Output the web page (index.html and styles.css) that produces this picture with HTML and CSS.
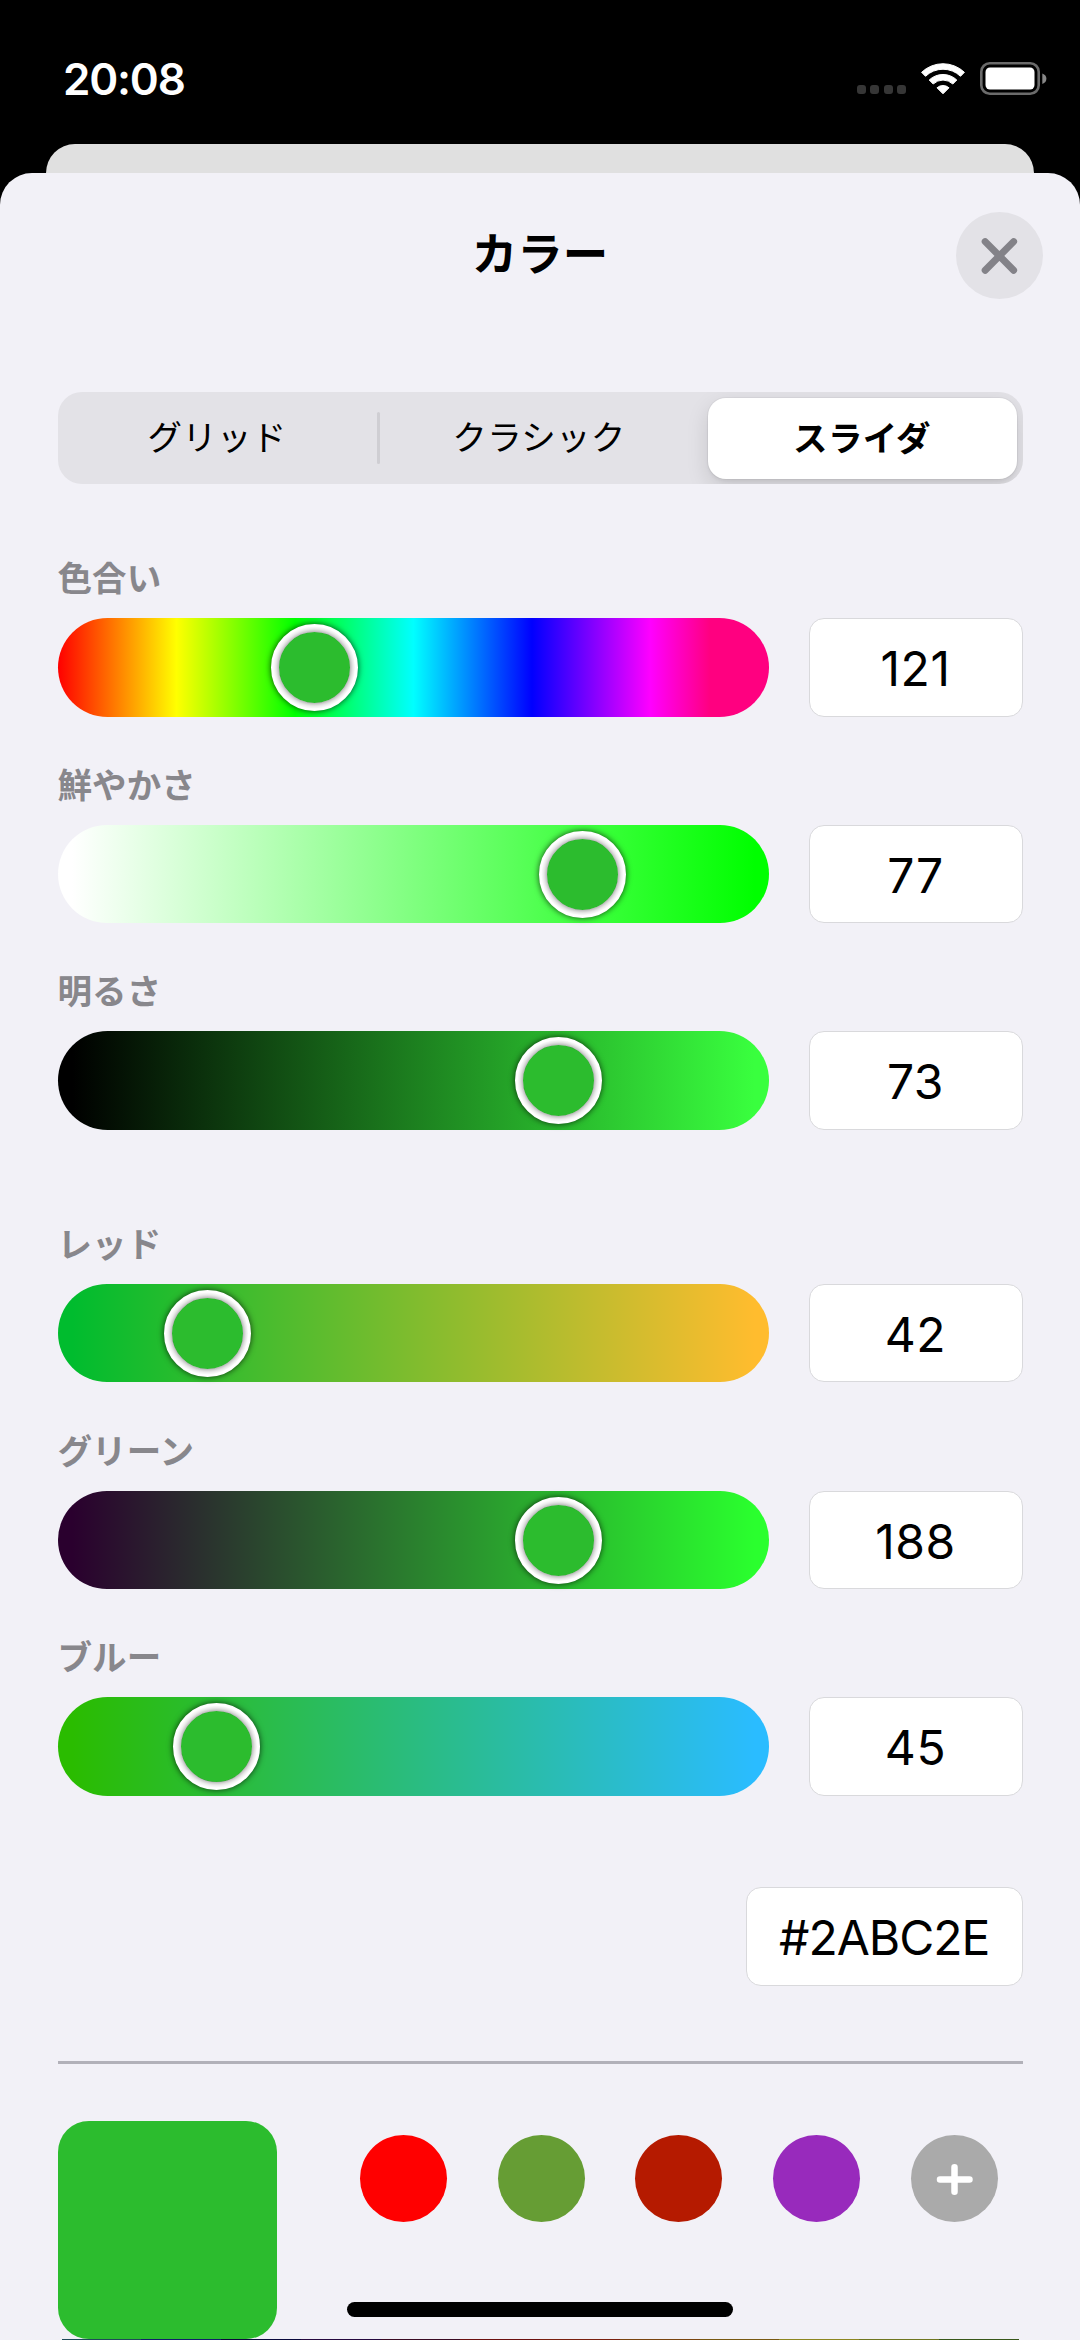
FILE: index.html
```html
<!DOCTYPE html>
<html lang="ja">
<head>
<meta charset="utf-8">
<title>カラー</title>
<link rel="stylesheet" href="styles.css">
</head>
<body>
<header class="status">
  <span class="clock">20:08</span>
  <div class="status-icons">
    <div class="signal"><i></i><i></i><i></i><i></i></div>
    <svg class="wifi" viewBox="0 0 44 33" width="44" height="33" fill="#fff">
      <path d="M0.6 10.3 A31 31 0 0 1 43.4 10.3 L39.5 14.3 A25.2 25.2 0 0 0 4.5 14.3 Z" stroke="#fff" stroke-width="1" stroke-linejoin="round"/>
      <path d="M8.2 18 A20 20 0 0 1 35.8 18 L31.8 22 A14.2 14.2 0 0 0 12.2 22 Z" stroke="#fff" stroke-width="1" stroke-linejoin="round"/>
      <path d="M16 25.8 A9 9 0 0 1 28 25.8 L22 31.8 Z" stroke="#fff" stroke-width="1" stroke-linejoin="round"/>
    </svg>
    <svg class="battery" viewBox="0 0 67 33" width="67" height="33">
      <rect x="1.3" y="1.3" width="57.4" height="30.4" rx="8.5" fill="none" stroke="#6b6b6b" stroke-width="2.6"/>
      <rect x="5.5" y="5.5" width="49" height="22" rx="4.5" fill="#fff"/>
      <path d="M62.3 11.5 Q66.4 13 66.4 16.7 Q66.4 20.4 62.3 22 Z" fill="#888"/>
    </svg>
  </div>
</header>
<div class="back-card"></div>
<main class="sheet">
  <div class="title-bar">
    <h1 class="title">カラー</h1>
    <button class="close" aria-label="閉じる">
      <svg viewBox="0 0 87 87" width="87" height="87"><path d="M29.2 29.6 L57.6 58.2 M57.6 29.6 L29.2 58.2" stroke="#838288" stroke-width="7" stroke-linecap="round"/></svg>
    </button>
  </div>
  <div class="segments">
    <div class="segment">グリッド</div>
    <div class="divider"></div>
    <div class="segment">クラシック</div>
    <div class="segment selected">スライダ</div>
  </div>
  <section class="group">
    <div class="row"><div class="label">色合い</div><div class="control"><div class="track hue"><div class="knob" style="left:213px"></div></div><div class="field">121</div></div></div>
    <div class="row"><div class="label">鮮やかさ</div><div class="control"><div class="track saturation"><div class="knob" style="left:481.5px"></div></div><div class="field">77</div></div></div>
    <div class="row"><div class="label">明るさ</div><div class="control"><div class="track brightness"><div class="knob" style="left:457.5px"></div></div><div class="field">73</div></div></div>
  </section>
  <section class="group">
    <div class="row"><div class="label">レッド</div><div class="control"><div class="track red"><div class="knob" style="left:106px"></div></div><div class="field">42</div></div></div>
    <div class="row"><div class="label">グリーン</div><div class="control"><div class="track green"><div class="knob" style="left:457.5px"></div></div><div class="field">188</div></div></div>
    <div class="row"><div class="label">ブルー</div><div class="control"><div class="track blue"><div class="knob" style="left:115px"></div></div><div class="field">45</div></div></div>
  </section>
  <div class="hex-row"><div class="field hex">#2ABC2E</div></div>
  <div class="separator"></div>
  <div class="palette">
    <div class="current"></div>
    <div class="swatches">
      <div class="swatch pure-red"></div>
      <div class="swatch olive"></div>
      <div class="swatch brick"></div>
      <div class="swatch purple"></div>
      <div class="swatch add"><svg viewBox="0 0 87 87" width="87" height="87"><path d="M29 44.5 H58.5 M43.5 32.3 V56.7" stroke="#fff" stroke-width="6.5" stroke-linecap="round"/></svg></div>
    </div>
  </div>
  <div class="grid-edge"><i></i><i></i><i></i><i></i><i></i><i></i><i></i><i></i><i></i><i></i><i></i><i></i></div>
</main>
<div class="home-bar"></div>
</body>
</html>
```

FILE: styles.css
```css
* { box-sizing: border-box; }
body {
  margin: 0;
  width: 1080px;
  height: 2340px;
  overflow: hidden;
  position: relative;
  background: #000;
  color: #000;
  font-family: Inter, "Noto Sans CJK JP", sans-serif;
}
.status {
  height: 144px;
  display: flex;
  justify-content: space-between;
  align-items: flex-start;
  padding: 62px 33px 0 63px;
}
.clock { color: #fff; font-size: 44px; line-height: 34px; font-weight: 600; letter-spacing: -1.2px; }
.status-icons { display: flex; }
.signal { display: flex; gap: 4.5px; padding-top: 23px; margin-right: 15px; }
.signal i { width: 9px; height: 9px; border-radius: 3px; background: #363636; }
.wifi { margin-right: 15px; }
.back-card { height: 29px; margin: 0 46px; border-radius: 29px 29px 0 0; background: #e0e0e0; }
.sheet {
  height: 2167px;
  padding: 39px 57.5px 0;
  border-radius: 32px 32px 0 0;
  background: #f2f1f7;
}
.title-bar { height: 87px; display: flex; justify-content: center; position: relative; }
.title { margin: 0; font-size: 45.5px; line-height: 86px; font-weight: 700; }
.close {
  position: absolute;
  top: 0;
  right: -20px;
  width: 87px;
  height: 87px;
  padding: 0;
  border: 0;
  border-radius: 50%;
  background: #e3e2e7;
}
.close svg { display: block; }
.segments {
  height: 92px;
  margin-top: 93px;
  display: grid;
  grid-template-columns: 319px 3px 319px 309px;
  column-gap: 0;
  align-items: center;
  border-radius: 24px;
  background: #e3e2e7;
  overflow: hidden;
}
.segment { text-align: center; font-size: 34.5px; line-height: 82px; letter-spacing: 0.3px; }
.divider { height: 52px; border-radius: 2px; background: #cfced3; }
.selected {
  height: 81px;
  margin-left: 9px;
  margin-right: -9px;
  border-radius: 18px;
  background: #fff;
  font-weight: 700;
  box-shadow: 0 0 0 1px rgba(0,0,0,.04), 0 8px 22px rgba(0,0,0,.13), 0 3px 3px rgba(0,0,0,.04);
}
.group { margin-top: 74px; display: flex; flex-direction: column; gap: 48.2px; }
.group + .group { margin-top: 94px; }
.label { height: 40px; margin-bottom: 20px; font-size: 34.5px; line-height: 42px; letter-spacing: 0.1px; font-weight: 700; color: #88878c; }
.control { display: flex; justify-content: space-between; height: 98.5px; }
.track { width: 711.5px; border-radius: 50px; position: relative; }
.hue { background: linear-gradient(90deg, #f00 0%, #ff0 16.667%, #0f0 33.333%, #0ff 50%, #00f 66.667%, #f0f 83.333%, #ff0080 91.667%); }
.saturation { background: linear-gradient(90deg, #fff 2%, #0f0 98%); }
.brightness { background: linear-gradient(90deg, #000 2%, #39ff3e 98%); }
.red { background: linear-gradient(90deg, #00bc2e 2%, #ffbc2e 98%); }
.green { background: linear-gradient(90deg, #2a002e 2%, #2aff2e 98%); }
.blue { background: linear-gradient(90deg, #2abc00 2%, #2abcff 98%); }
.knob {
  position: absolute;
  top: 6px;
  width: 87px;
  height: 87px;
  border: 8.5px solid #fff;
  border-radius: 50%;
  background: #2cbc2e;
  box-shadow: 0 0 6px rgba(0,0,0,.75);
}
.knob::before {
  content: "";
  position: absolute;
  inset: 0;
  border-radius: 50%;
  box-shadow: 0 0 6px rgba(0,0,0,.6);
  clip-path: circle(41px);
}
.field {
  width: 214px;
  height: 98.5px;
  border: 1px solid #d9d9dc;
  border-radius: 15px;
  background: #fff;
  text-align: center;
  font-size: 48px;
  line-height: 99px;
  letter-spacing: 0.6px;
}
.hex-row { display: flex; justify-content: flex-end; margin-top: 91.5px; }
.hex { width: 276.5px; letter-spacing: -1px; }
.separator { height: 3px; margin-top: 75.2px; background: #b2b1b9; }
.palette { display: flex; justify-content: space-between; margin-top: 57px; height: 218px; }
.current { width: 219px; height: 218px; border-radius: 31px; background: #2cbc2e; }
.swatches { display: flex; gap: 50.8px; padding: 14px 24.5px 0 0; }
.swatch { width: 87px; height: 87px; border-radius: 50%; }
.swatch svg { display: block; }
.pure-red { background: #f00; }
.olive { background: #669d34; }
.brick { background: #b51a00; }
.purple { background: #982abc; }
.add { background: #aaa; }
.grid-edge { display: flex; height: 1px; padding: 0 4px; }
.grid-edge i { flex: 1; background: #1e4a5a; }
.grid-edge i:nth-child(2) { background: #101f6a; }
.grid-edge i:nth-child(3) { background: #09083c; }
.grid-edge i:nth-child(4) { background: #26083f; }
.grid-edge i:nth-child(5) { background: #3a0a24; }
.grid-edge i:nth-child(6) { background: #6c1010; }
.grid-edge i:nth-child(7) { background: #7a2010; }
.grid-edge i:nth-child(8) { background: #7a4510; }
.grid-edge i:nth-child(9) { background: #785812; }
.grid-edge i:nth-child(10) { background: #8d8620; }
.grid-edge i:nth-child(11) { background: #6f7620; }
.grid-edge i:nth-child(12) { background: #38571a; }
.home-bar {
  position: absolute;
  left: 347px;
  top: 2302px;
  width: 386px;
  height: 15px;
  border-radius: 8px;
  background: #000;
}
```
